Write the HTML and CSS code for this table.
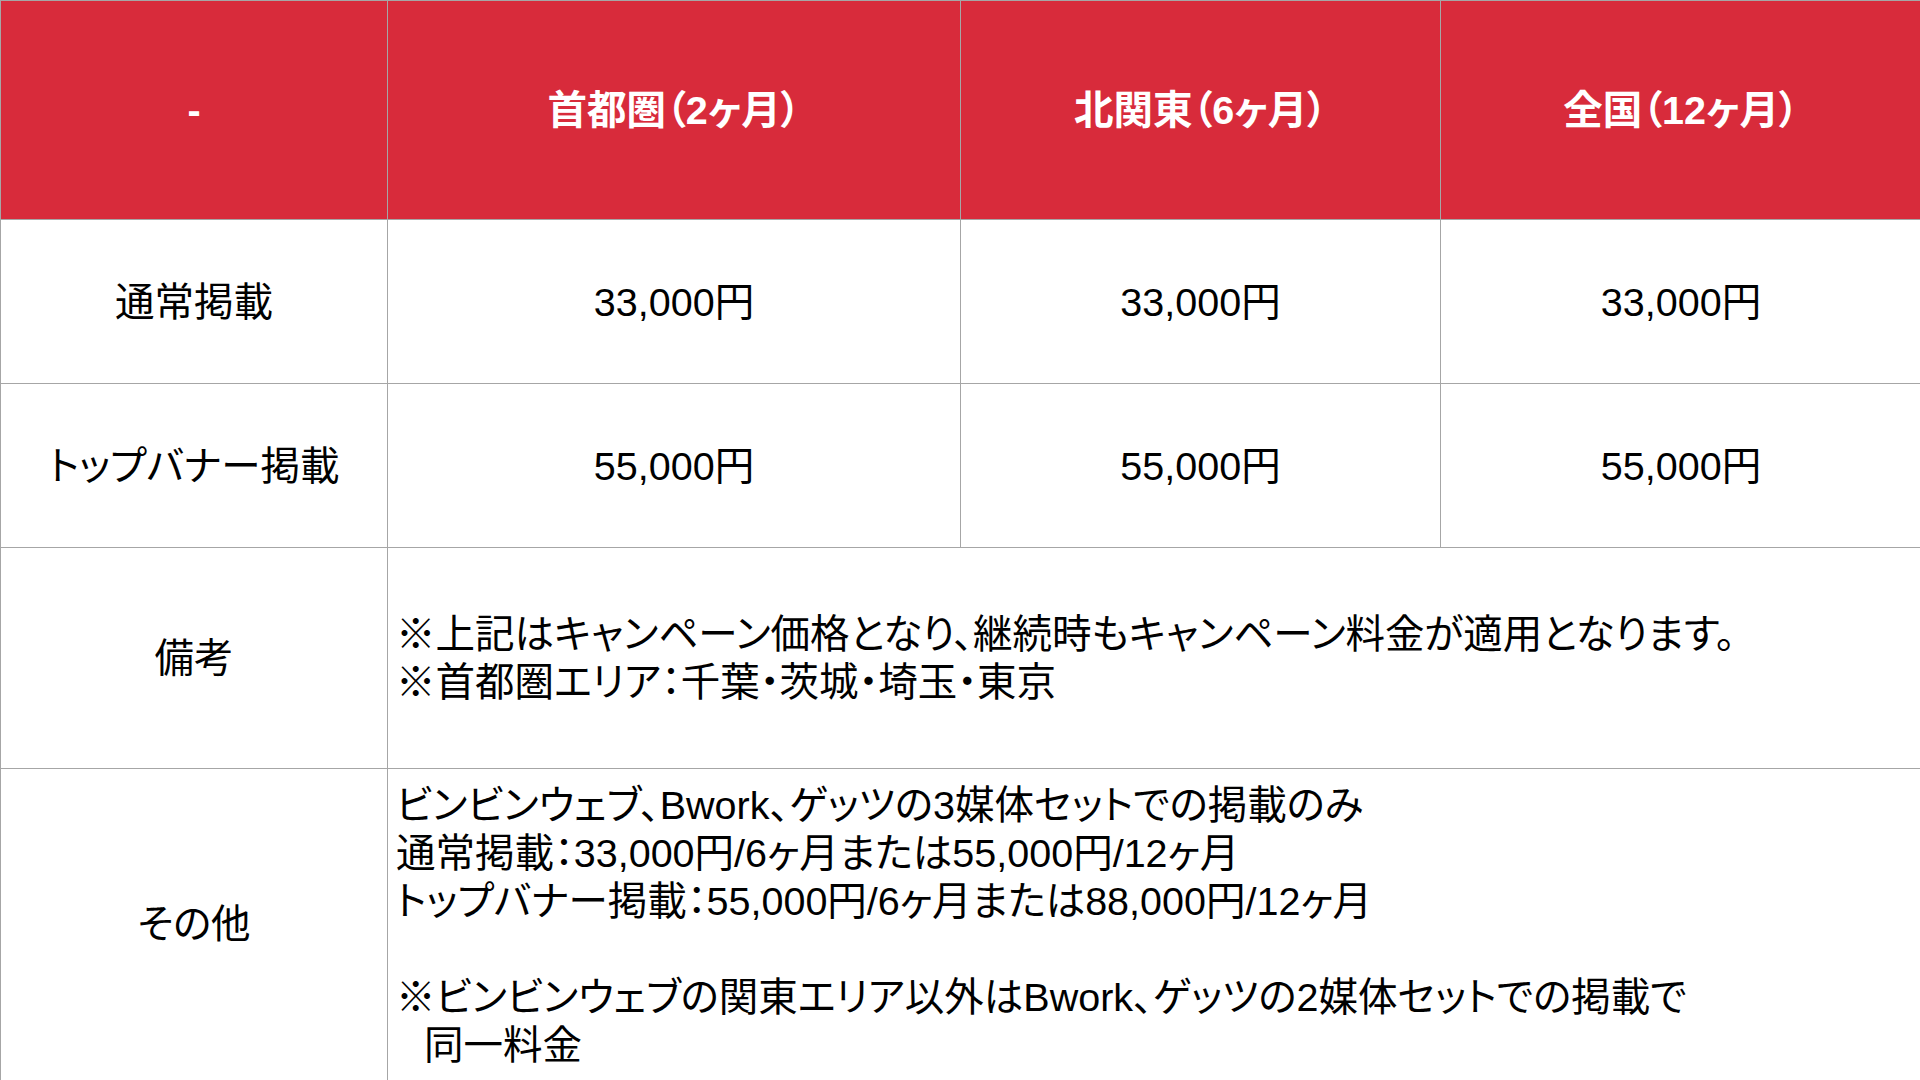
FILE: index.html
```html
<!DOCTYPE html>
<html lang="ja">
<head>
<meta charset="utf-8">
<title>料金表</title>
<link rel="stylesheet" href="styles.css">
</head>
<body>
<table class="price-table">
  <colgroup>
    <col class="col-label">
    <col class="col-a">
    <col class="col-b">
    <col class="col-c">
  </colgroup>
  <thead>
    <tr class="row-head">
      <th>-</th>
      <th>首都圏（2ヶ月）</th>
      <th>北関東（6ヶ月）</th>
      <th>全国（12ヶ月）</th>
    </tr>
  </thead>
  <tbody>
    <tr class="row-price">
      <td class="label">通常掲載</td>
      <td>33,000円</td>
      <td>33,000円</td>
      <td>33,000円</td>
    </tr>
    <tr class="row-price">
      <td class="label">トップバナー掲載</td>
      <td>55,000円</td>
      <td>55,000円</td>
      <td>55,000円</td>
    </tr>
    <tr class="row-note">
      <td class="label">備考</td>
      <td class="text" colspan="3">※上記はキャンペーン価格となり、継続時もキャンペーン料金が適用となります。<br>※首都圏エリア：千葉・茨城・埼玉・東京</td>
    </tr>
    <tr class="row-other">
      <td class="label">その他</td>
      <td class="text" colspan="3">ビンビンウェブ、Bwork、ゲッツの3媒体セットでの掲載のみ<br>通常掲載：33,000円/6ヶ月または55,000円/12ヶ月<br>トップバナー掲載：55,000円/6ヶ月または88,000円/12ヶ月<br><br>※ビンビンウェブの関東エリア以外はBwork、ゲッツの2媒体セットでの掲載で<br><span class="indent">同一料金</span></td>
    </tr>
  </tbody>
</table>
</body>
</html>
```

FILE: styles.css
```css
html, body {
  margin: 0;
  padding: 0;
  background: #ffffff;
  overflow: hidden;
}

body {
  width: 1920px;
  height: 1080px;
  font-family: "Liberation Sans", "Noto Sans CJK JP", sans-serif;
  color: #000000;
}

.price-table {
  border-collapse: collapse;
  table-layout: fixed;
  width: 1921px;
  font-size: 39.5px;
  font-feature-settings: "palt";
}

.col-label { width: 387px; }
.col-a { width: 573px; }
.col-b { width: 480px; }
.col-c { width: 481px; }

.price-table th,
.price-table td {
  border: 1px solid #a6a6a6;
  padding: 0;
  text-align: center;
  vertical-align: middle;
  line-height: 48px;
}

.row-head th {
  background: #d82b3b;
  color: #ffffff;
  font-weight: bold;
  height: 218px;
}

.row-price td {
  height: 163px;
}

.row-note td {
  height: 220px;
}

.row-other td {
  height: 320px;
  vertical-align: top;
}

.row-other td.label {
  vertical-align: top;
  padding-top: 131px;
}

.row-other td.text {
  padding-top: 12px;
}

.price-table td.text {
  text-align: left;
  padding-left: 8px;
}

.indent {
  display: inline-block;
  padding-left: 28px;
}
```
